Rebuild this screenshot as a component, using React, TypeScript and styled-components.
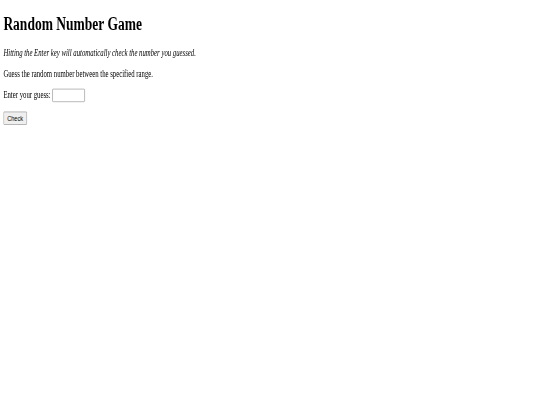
import React, { useState } from "react";
import styled, { createGlobalStyle } from "styled-components";

// The reference is a 1280x675 page squeezed into 540x405,
// so the page is laid out at its own size and then scaled down.
const VIEW_W = 1280;
const VIEW_H = 675;

const GlobalStyle = createGlobalStyle`
  html, body {
    margin: 0;
    padding: 0;
    background: #ffffff;
    overflow: hidden;
  }
`;

const Viewport = styled.div`
  width: 540px;
  height: 405px;
  overflow: hidden;
`;

const Page = styled.div`
  width: ${VIEW_W}px;
  height: ${VIEW_H}px;
  padding: 0 8px;
  box-sizing: border-box;
  transform: scale(${540 / VIEW_W}, ${405 / VIEW_H});
  transform-origin: top left;
  font-family: "Liberation Serif", "Times New Roman", serif;
  font-size: 16px;
  color: #000000;
  display: flow-root;
`;

const Title = styled.h1`
  font-size: 32px;
  font-weight: bold;
  margin: 21.44px 0;
`;

const Text = styled.p<{ $italic?: boolean }>`
  margin: 16px 0;
  font-style: ${({ $italic }) => ($italic ? "italic" : "normal")};
`;

const GuessInput = styled.input`
  width: 71px;
  font-family: "Liberation Sans", Arial, sans-serif;
  font-size: 13.33px;
  padding: 1px 2px;
  border: 1px solid #767676;
  border-radius: 2px;
  height: 18px;
  vertical-align: baseline;
`;

const CheckButton = styled.button`
  font-family: "Liberation Sans", Arial, sans-serif;
  font-size: 13.33px;
  padding: 1px 8px;
  background: #efefef;
  border: 1px solid #767676;
  border-radius: 2px;
  color: #000000;
  height: 22px;
`;

const App = () => {
  const [target] = useState(() => Math.floor(Math.random() * 100) + 1);
  const [guess, setGuess] = useState("");
  const [message, setMessage] = useState("");

  const check = () => {
    const n = Number(guess);
    if (!guess) return;
    if (n === target) setMessage("Correct!");
    else setMessage(n < target ? "Too low." : "Too high.");
  };

  return (
    <Viewport>
      <GlobalStyle />
      <Page>
        <Title>Random Number Game</Title>
        <Text $italic>
          Hitting the Enter key will automatically check the number you guessed.
        </Text>
        <Text>Guess the random number between the specified range.</Text>
        <Text>
          <label htmlFor="guess">Enter your guess: </label>
          <GuessInput
            id="guess"
            type="text"
            value={guess}
            onChange={(e) => setGuess(e.target.value)}
            onKeyDown={(e) => e.key === "Enter" && check()}
          />
        </Text>
        <CheckButton onClick={check}>Check</CheckButton>
        {message && <Text>{message}</Text>}
      </Page>
    </Viewport>
  );
};

export default App;
